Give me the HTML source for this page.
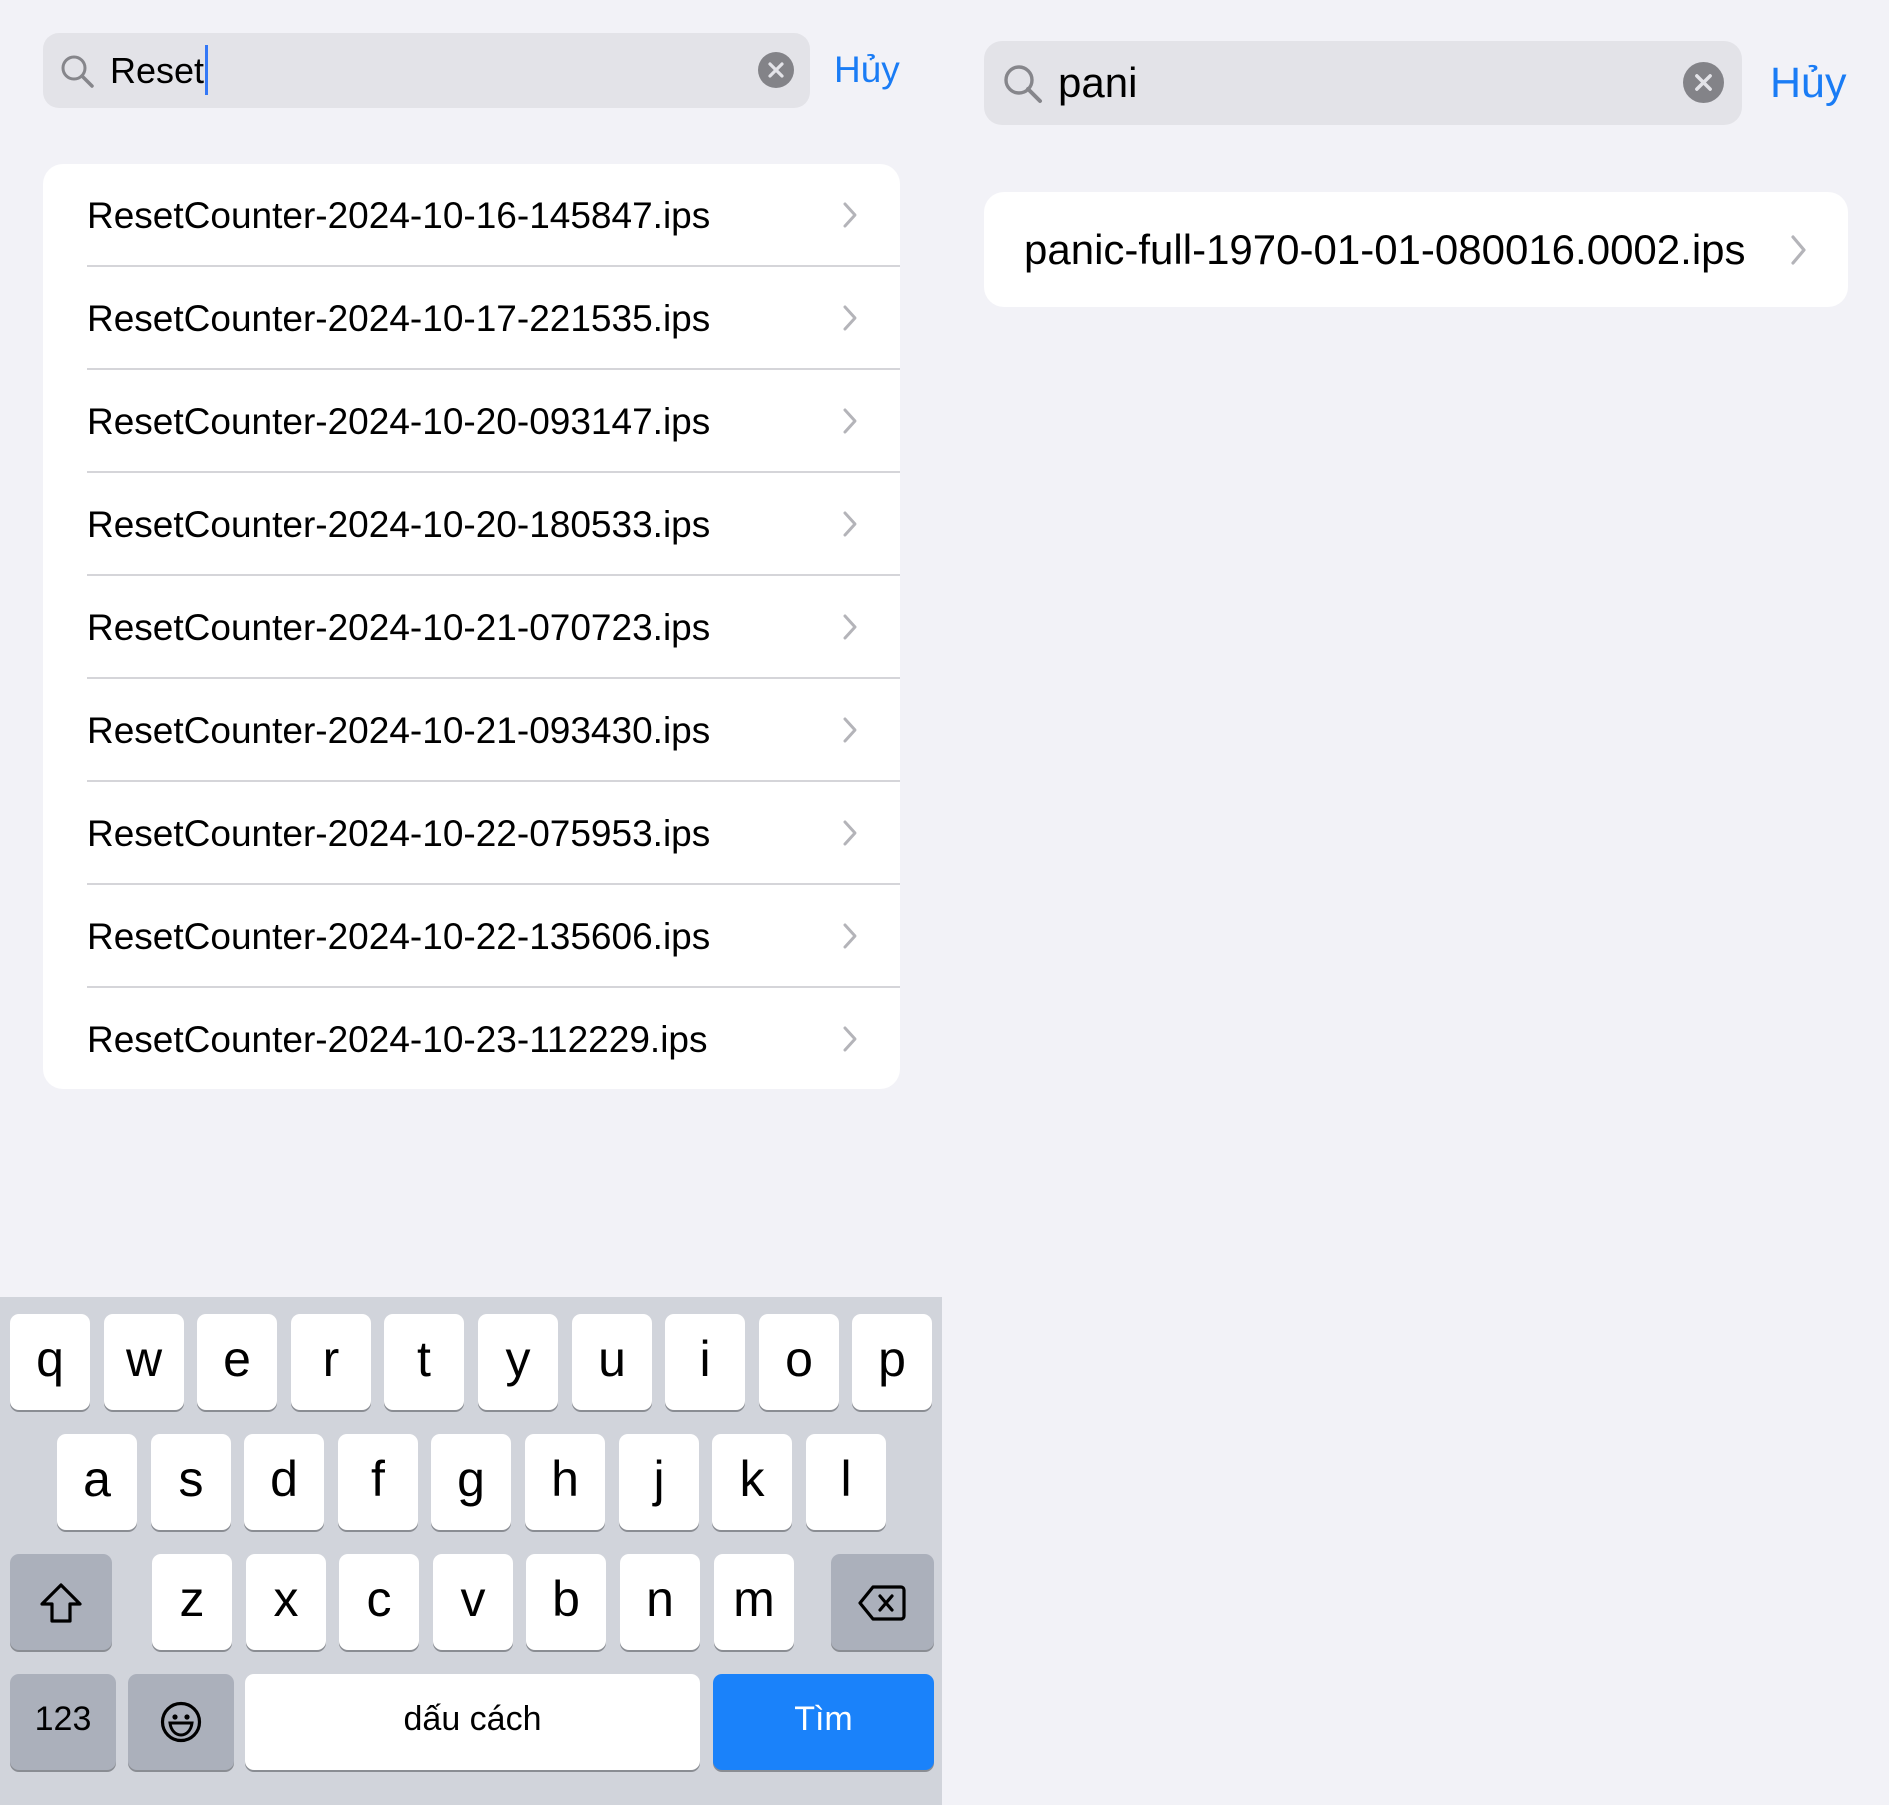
<!DOCTYPE html>
<html><head><meta charset="utf-8"><style>
*{margin:0;padding:0;box-sizing:border-box}
body{width:1889px;height:1805px;background:#f2f2f7;position:relative;overflow:hidden;font-family:"Liberation Sans","DejaVu Sans",sans-serif;color:#000}
.a{position:absolute}
.bar{background:#e3e3e8;border-radius:16px}
.card{background:#fff;border-radius:20px}
.row{position:absolute;left:0;right:0;height:103px}
.row .t{position:absolute;left:44px;top:0;line-height:103px;font-size:37px}
.row .sep{position:absolute;left:44px;right:0;bottom:0;height:2px;background:#d5d5d9}
.kb{position:absolute;left:0;top:1297px;width:942px;height:508px;background:#d1d4db}
.k{position:absolute;width:80px;height:96px;background:#fff;border-radius:9px;box-shadow:0 2px 0 #8a8d93;text-align:center;line-height:90px;font-size:50px}
.g{background:#abb0bb}
</style></head><body>

<div class="a bar" style="left:43px;top:33px;width:767px;height:75px"></div>
<svg class="a" style="left:58px;top:52px" width="40" height="40" viewBox="0 0 40 40"><circle cx="16" cy="16" r="11" fill="none" stroke="#86868b" stroke-width="3"/><line x1="24" y1="24" x2="34" y2="34" stroke="#86868b" stroke-width="3.5" stroke-linecap="round"/></svg>
<div class="a" style="left:110px;top:46px;font-size:36px;line-height:50px">Reset</div>
<div class="a" style="left:205px;top:45px;width:3px;height:50px;background:#3478f6"></div>
<svg class="a" style="left:758px;top:52px" width="36" height="36" viewBox="0 0 36 36"><circle cx="18" cy="18" r="18" fill="#838388"/><path d="M12 12L24 24M24 12L12 24" stroke="#e3e3e8" stroke-width="3.2" stroke-linecap="round"/></svg>
<div class="a" style="left:834px;top:45px;font-size:37px;line-height:50px;color:#1a7cf5">Hủy</div>

<div class="a card" style="left:43px;top:164px;width:857px;height:925px">
<div class="row" style="top:0"><div class="t">ResetCounter-2024-10-16-145847.ips</div><div class="sep"></div></div>
<div class="row" style="top:103px"><div class="t">ResetCounter-2024-10-17-221535.ips</div><div class="sep"></div></div>
<div class="row" style="top:206px"><div class="t">ResetCounter-2024-10-20-093147.ips</div><div class="sep"></div></div>
<div class="row" style="top:309px"><div class="t">ResetCounter-2024-10-20-180533.ips</div><div class="sep"></div></div>
<div class="row" style="top:412px"><div class="t">ResetCounter-2024-10-21-070723.ips</div><div class="sep"></div></div>
<div class="row" style="top:515px"><div class="t">ResetCounter-2024-10-21-093430.ips</div><div class="sep"></div></div>
<div class="row" style="top:618px"><div class="t">ResetCounter-2024-10-22-075953.ips</div><div class="sep"></div></div>
<div class="row" style="top:721px"><div class="t">ResetCounter-2024-10-22-135606.ips</div><div class="sep"></div></div>
<div class="row" style="top:824px"><div class="t">ResetCounter-2024-10-23-112229.ips</div></div>
</div>
<svg class="a" style="left:840px;top:164px" width="20" height="925" viewBox="0 0 20 925">
<g fill="none" stroke="#b4b4b9" stroke-width="3" stroke-linecap="round" stroke-linejoin="round">
<path d="M5 40L15 51L5 62"/><path d="M5 143L15 154L5 165"/><path d="M5 246L15 257L5 268"/><path d="M5 349L15 360L5 371"/><path d="M5 452L15 463L5 474"/><path d="M5 555L15 566L5 577"/><path d="M5 658L15 669L5 680"/><path d="M5 761L15 772L5 783"/><path d="M5 864L15 875L5 886"/>
</g></svg>

<div class="a bar" style="left:984px;top:41px;width:758px;height:84px;border-radius:18px"></div>
<svg class="a" style="left:1000px;top:61px" width="46" height="46" viewBox="0 0 46 46"><circle cx="19" cy="19" r="13" fill="none" stroke="#86868b" stroke-width="3.4"/><line x1="28" y1="28" x2="40" y2="40" stroke="#86868b" stroke-width="4" stroke-linecap="round"/></svg>
<div class="a" style="left:1058px;top:55px;font-size:42px;line-height:56px">pani</div>
<svg class="a" style="left:1683px;top:62px" width="41" height="41" viewBox="0 0 40 40"><circle cx="20" cy="20" r="20" fill="#838388"/><path d="M13.5 13.5L26.5 26.5M26.5 13.5L13.5 26.5" stroke="#e3e3e8" stroke-width="3.4" stroke-linecap="round"/></svg>
<div class="a" style="left:1770px;top:55px;font-size:43px;line-height:56px;color:#1a7cf5">Hủy</div>

<div class="a card" style="left:984px;top:192px;width:864px;height:115px"></div>
<div class="a" style="left:1024px;top:192px;font-size:42px;line-height:115px">panic-full-1970-01-01-080016.0002.ips</div>
<svg class="a" style="left:1788px;top:234px" width="20" height="32" viewBox="0 0 20 32"><path d="M5 3L16 16L5 29" fill="none" stroke="#b4b4b9" stroke-width="3.2" stroke-linecap="round" stroke-linejoin="round"/></svg>

<div class="kb"></div>
<div class="k" style="left:10px;top:1314px">q</div>
<div class="k" style="left:104px;top:1314px">w</div>
<div class="k" style="left:197px;top:1314px">e</div>
<div class="k" style="left:291px;top:1314px">r</div>
<div class="k" style="left:384px;top:1314px">t</div>
<div class="k" style="left:478px;top:1314px">y</div>
<div class="k" style="left:572px;top:1314px">u</div>
<div class="k" style="left:665px;top:1314px">i</div>
<div class="k" style="left:759px;top:1314px">o</div>
<div class="k" style="left:852px;top:1314px">p</div>

<div class="k" style="left:57px;top:1434px">a</div>
<div class="k" style="left:151px;top:1434px">s</div>
<div class="k" style="left:244px;top:1434px">d</div>
<div class="k" style="left:338px;top:1434px">f</div>
<div class="k" style="left:431px;top:1434px">g</div>
<div class="k" style="left:525px;top:1434px">h</div>
<div class="k" style="left:619px;top:1434px">j</div>
<div class="k" style="left:712px;top:1434px">k</div>
<div class="k" style="left:806px;top:1434px">l</div>

<div class="k g" style="left:10px;top:1554px;width:102px"><svg style="position:absolute;left:28px;top:28px" width="46" height="42" viewBox="0 0 46 42"><path d="M23 3L42 22H32V39H14V22H4Z" fill="none" stroke="#000" stroke-width="3.2" stroke-linejoin="round"/></svg></div>
<div class="k" style="left:152px;top:1554px">z</div>
<div class="k" style="left:246px;top:1554px">x</div>
<div class="k" style="left:339px;top:1554px">c</div>
<div class="k" style="left:433px;top:1554px">v</div>
<div class="k" style="left:526px;top:1554px">b</div>
<div class="k" style="left:620px;top:1554px">n</div>
<div class="k" style="left:714px;top:1554px">m</div>
<div class="k g" style="left:831px;top:1554px;width:103px"><svg style="position:absolute;left:26px;top:30px" width="50" height="38" viewBox="0 0 50 38"><path d="M16 3H44a3 3 0 0 1 3 3V32a3 3 0 0 1-3 3H16L3 19Z" fill="none" stroke="#000" stroke-width="3.2" stroke-linejoin="round"/><path d="M23 12L35 26M35 12L23 26" stroke="#000" stroke-width="3.2" stroke-linecap="round"/></svg></div>

<div class="k g" style="left:10px;top:1674px;width:106px;font-size:34px">123</div>
<div class="k g" style="left:128px;top:1674px;width:106px"><svg style="position:absolute;left:32px;top:27px" width="42" height="42" viewBox="0 0 42 42"><circle cx="21" cy="21" r="18.5" fill="none" stroke="#000" stroke-width="3.2"/><circle cx="15" cy="16" r="2.6"/><circle cx="27" cy="16" r="2.6"/><path d="M10 22H32C31 30 26 34 21 34S11 30 10 22Z" fill="none" stroke="#000" stroke-width="3"/></svg></div>
<div class="k" style="left:245px;top:1674px;width:455px;font-size:34px">dấu cách</div>
<div class="k" style="left:713px;top:1674px;width:221px;font-size:34px;background:#1a82fa;color:#fff">Tìm</div>
</body></html>
